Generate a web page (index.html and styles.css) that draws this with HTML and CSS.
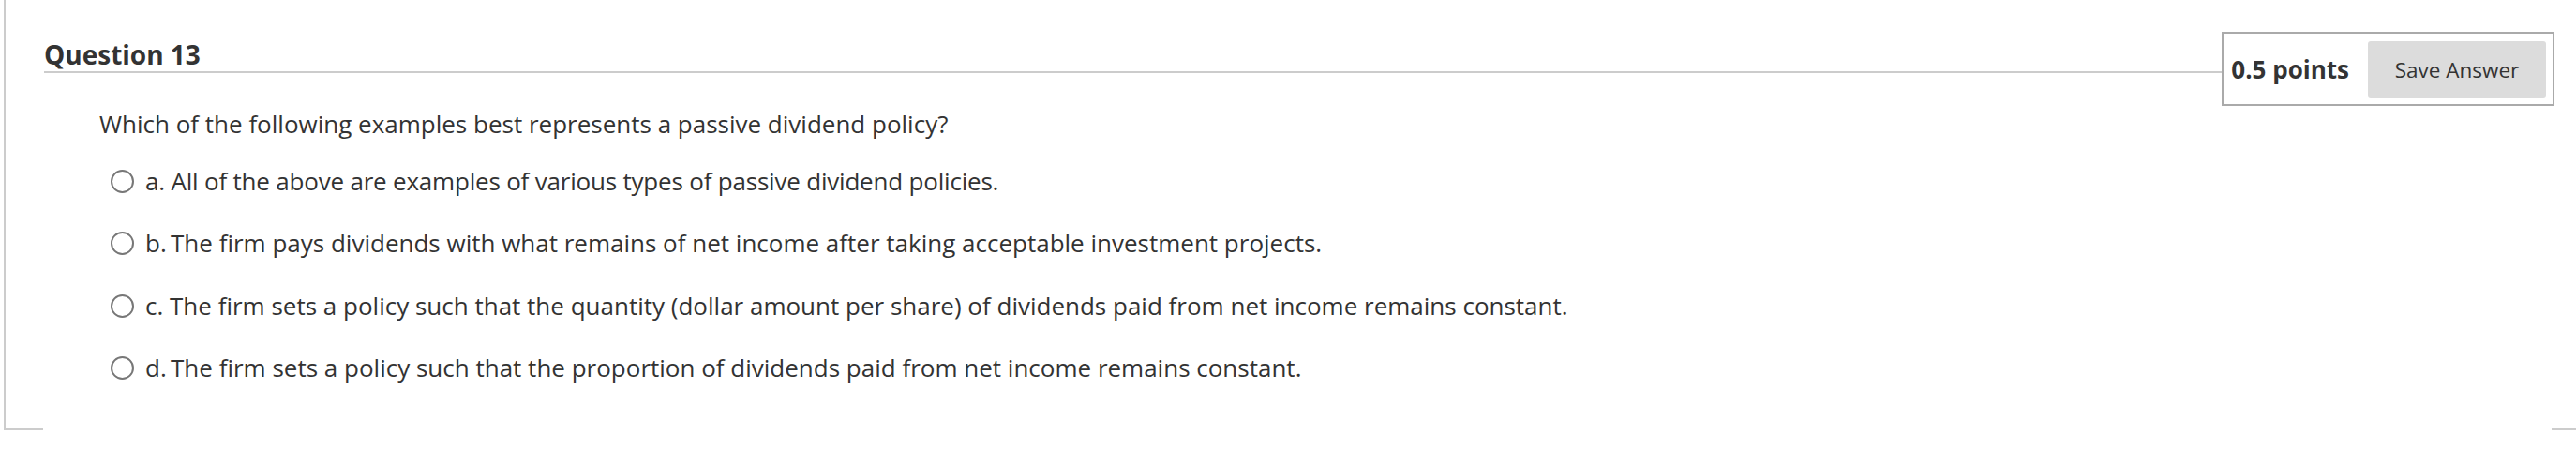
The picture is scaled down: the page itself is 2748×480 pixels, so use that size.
FILE: index.html
```html
<!DOCTYPE html>
<html lang="en">
<head>
<meta charset="utf-8">
<title>Question 13</title>
<link rel="stylesheet" href="styles.css">
</head>
<body>
<div class="frame">
  <div class="head">
    <h3 class="title">Question 13</h3>
    <div class="points">
      <span class="pts">0.5 points</span>
      <button class="save" type="button">Save Answer</button>
    </div>
  </div>
  <div class="body">
    <p class="prompt">Which of the following examples best represents a passive dividend policy?</p>
    <ul class="options">
      <li class="opt"><span class="radio"></span><span class="label label-tight">a. All of the above are examples of various types of passive dividend policies.</span></li>
      <li class="opt"><span class="radio"></span><span class="label">b.&#8201;The firm pays dividends with what remains of net income after taking acceptable investment projects.</span></li>
      <li class="opt"><span class="radio"></span><span class="label">c. The firm sets a policy such that the quantity (dollar amount per share) of dividends paid from net income remains constant.</span></li>
      <li class="opt"><span class="radio"></span><span class="label">d.&#8201;The firm sets a policy such that the proportion of dividends paid from net income remains constant.</span></li>
    </ul>
  </div>
  <div class="foot"><span class="seg seg-left"></span><span class="seg seg-right"></span></div>
</div>
</body>
</html>
```

FILE: styles.css
```css
* { box-sizing: border-box; }
html, body {
  margin: 0;
  padding: 0;
  background: #ffffff;
}
body {
  width: 2748px;
  height: 480px;
  overflow: hidden;
  font-family: "Open Sans", "Liberation Sans", sans-serif;
  color: #333333;
}
.frame {
  margin-left: 4px;
  width: 2744px;
  height: 459px;
  border-left: 2px solid #cccccc;
  display: flex;
  flex-direction: column;
}
.head {
  display: flex;
  align-items: flex-start;
  padding-left: 41px;
  padding-right: 23px;
}
.title {
  flex: 1;
  margin: 42px 0 0 0;
  font-size: 28px;
  font-weight: 700;
  line-height: 32px;
  padding-bottom: 2px;
  border-bottom: 2px solid #cccccc;
  color: #333333;
}
.points {
  margin-top: 34px;
  display: flex;
  align-items: center;
  border: 2px solid #aaaaaa;
  padding: 8px 7px 7px 8px;
}
.pts {
  font-size: 26px;
  font-weight: 700;
  line-height: 34px;
  margin-right: 20px;
}
.save {
  width: 190px;
  height: 60px;
  border: 0;
  border-radius: 3px;
  background: #dcdcdc;
  color: #333333;
  font-family: "Open Sans", "Liberation Sans", sans-serif;
  font-size: 22.5px;
  padding: 0;
}
.body {
  padding-left: 100px;
}
.prompt {
  margin: 2px 0 0 0;
  font-size: 26px;
  line-height: 34px;
}
.options {
  list-style: none;
  margin: 27px 0 0 0;
  padding: 0 0 0 12px;
  display: flex;
  flex-direction: column;
  gap: 32.3px;
}
.opt {
  display: flex;
  align-items: center;
  font-size: 26px;
  line-height: 34px;
}
.label-tight {
  letter-spacing: -0.2px;
}
.radio {
  width: 25px;
  height: 25px;
  border: 2px solid #777777;
  border-radius: 50%;
  margin-top: 1px;
  margin-right: 12px;
  flex: none;
}
.foot {
  margin-top: auto;
  height: 2px;
  display: flex;
  justify-content: space-between;
}
.seg {
  height: 2px;
  background: #cccccc;
}
.seg-left { width: 40px; }
.seg-right { width: 26px; }
```
